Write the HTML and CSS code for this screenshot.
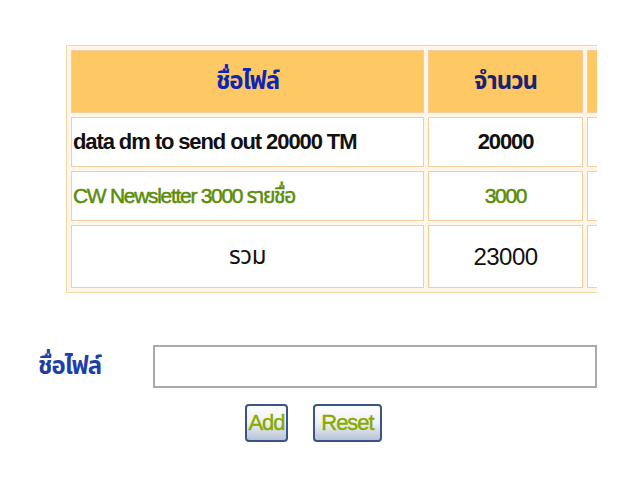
FILE: index.html
```html
<!DOCTYPE html>
<html lang="th">

    <head>
        <meta charset="UTF-8">
        <title>File List</title>
        <link rel="stylesheet" href="styles.css">
    </head>

    <body>
        <div class="page">
            <div class="table-wrap">
                <table class="file-table">
                    <tr class="head">
                        <th class="col-name name-head">ชื่อไฟล์</th>
                        <th class="col-count">จำนวน</th>
                        <th class="col-extra"></th>
                    </tr>
                    <tr class="row-main">
                        <td class="left">data dm to send out 20000 TM</td>
                        <td>20000</td>
                        <td></td>
                    </tr>
                    <tr class="row-green">
                        <td class="left">CW Newsletter 3000 รายชื่อ</td>
                        <td>3000</td>
                        <td></td>
                    </tr>
                    <tr class="row-total">
                        <td>รวม</td>
                        <td>23000</td>
                        <td></td>
                    </tr>
                </table>
            </div>

            <form class="file-form">
                <div class="form-row">
                    <label for="file-name">ชื่อไฟล์</label>
                    <input type="text" id="file-name">
                </div>
                <div class="buttons">
                    <button type="submit" class="btn-add">Add</button>
                    <button type="reset" class="btn-reset">Reset</button>
                </div>
            </form>
        </div>
    </body>

</html>
```

FILE: styles.css
```css
* {
    margin: 0;
    padding: 0;
    box-sizing: border-box;
}

body {
    background-color: #fff;
    font-family: 'Liberation Sans', 'Noto Sans Thai', 'Loma', sans-serif;
    color: #111;
}

.page {
    padding: 45px 0 0 66px;
}

.table-wrap {
    width: 531px;
    overflow: hidden;
}

.file-table {
    width: 560px;
    border: 1px solid #f7d3a8;
    border-spacing: 4px;
    background-color: #fff6ea;
    table-layout: fixed;
}

.file-table th,
.file-table td {
    border: 1px solid #f7cd9e;
    background-color: #fff;
    text-align: center;
    font-size: 22px;
}

.col-name {
    width: 353px;
}

.col-count {
    width: 155px;
}

.head th {
    height: 63px;
    background-color: #fec865;
    color: #1d2270;
    font-weight: bold;
    font-size: 24px;
    letter-spacing: -1px;
}

.head .name-head {
    color: #1024b4;
}

.file-table td.left {
    text-align: left;
    padding-left: 1px;
}

.row-main td {
    height: 50px;
    font-weight: bold;
    letter-spacing: -1.1px;
}

.row-green td {
    height: 50px;
    color: #5b8c0a;
    font-size: 21px;
    letter-spacing: -1.3px;
    -webkit-text-stroke: 0.5px #5b8c0a;
}

.row-total td {
    height: 63px;
    font-size: 24px;
    letter-spacing: -0.5px;
}

.file-form {
    margin-top: 52px;
}

.form-row {
    display: flex;
    align-items: center;
    margin-left: -28px;
}

.form-row label {
    width: 115px;
    color: #1d40a8;
    font-size: 24px;
    font-weight: bold;
    letter-spacing: -1px;
}

.form-row input {
    width: 444px;
    height: 43px;
    border: 2px solid #a9a9a9;
    font-size: 18px;
}

.buttons {
    display: flex;
    gap: 25px;
    margin: 16px 0 0 179px;
}

.buttons button {
    height: 38px;
    border: 2px solid #3b5486;
    border-radius: 4px;
    background: linear-gradient(#fdfdfd, #eef1f5 50%, #b6c3d6);
    color: #88aa00;
    font-family: 'Liberation Sans', sans-serif;
    font-size: 22px;
    letter-spacing: -1px;
    -webkit-text-stroke: 0.4px #88aa00;
}

.btn-add {
    width: 43px;
}

.btn-reset {
    width: 69px;
}
```
